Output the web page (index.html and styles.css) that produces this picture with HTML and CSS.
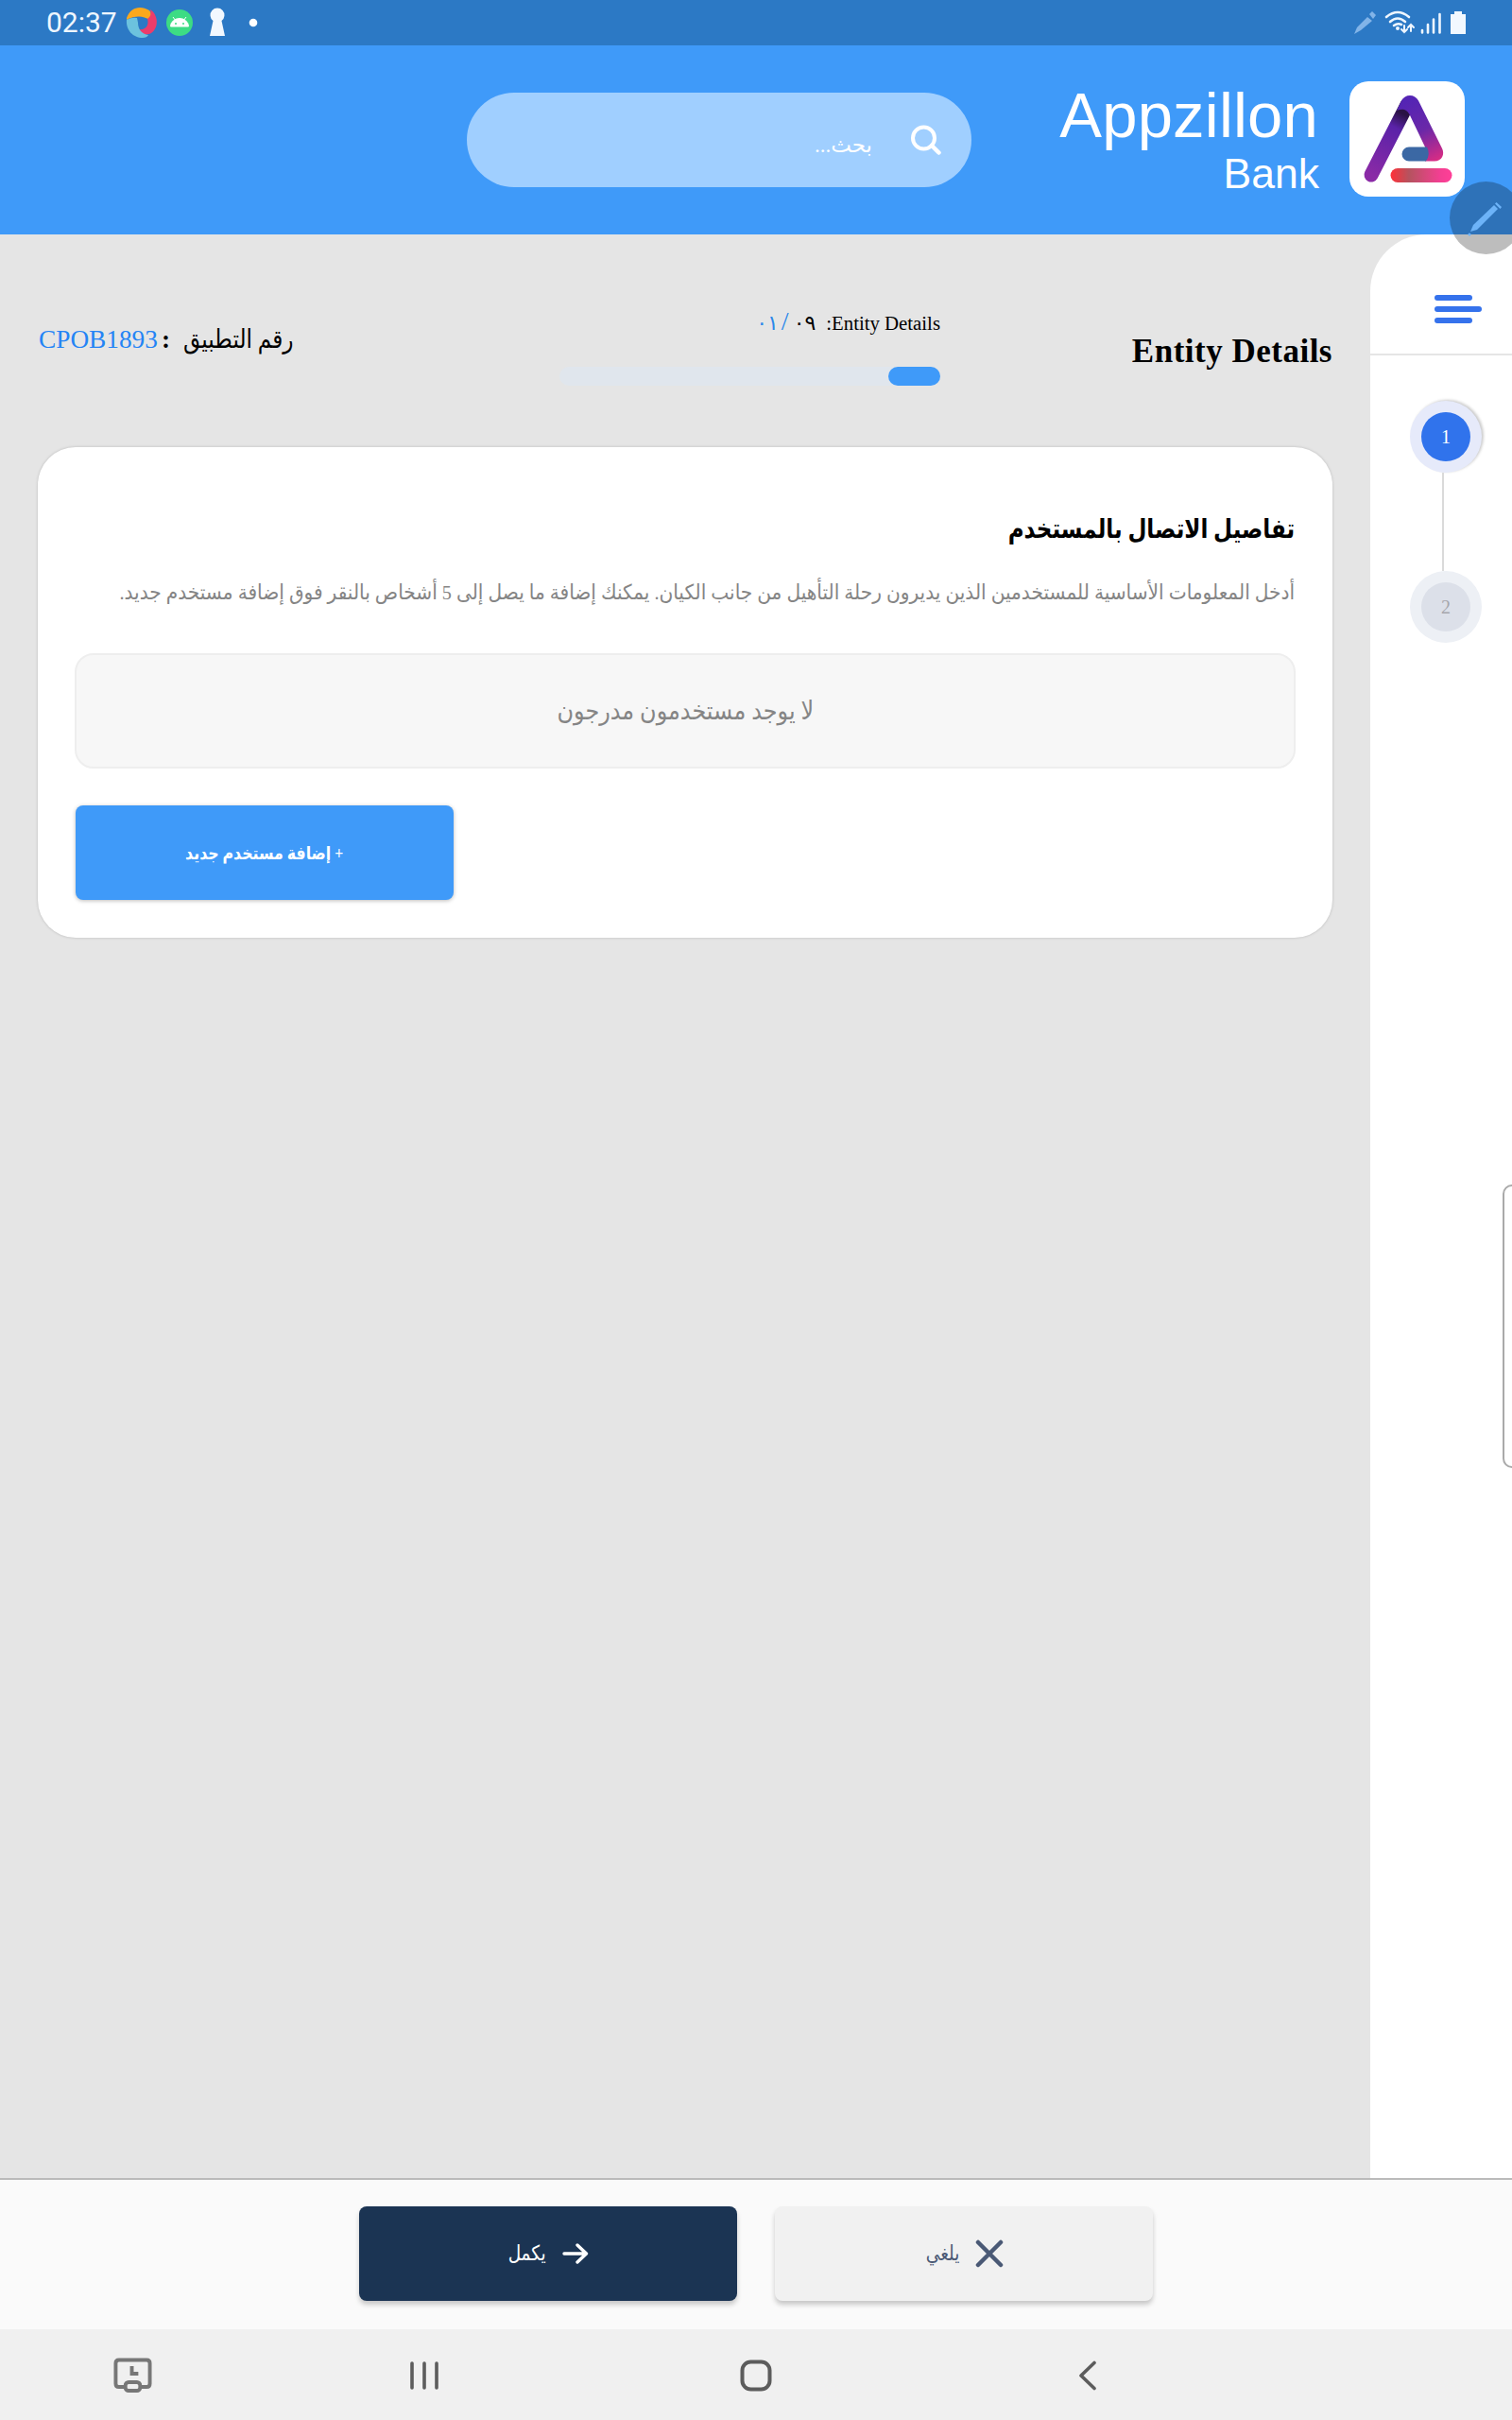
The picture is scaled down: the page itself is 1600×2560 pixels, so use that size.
FILE: index.html
```html
<!DOCTYPE html>
<html lang="ar" dir="rtl">
<head>
<meta charset="utf-8">
<title>Appzillon Bank</title>
<link rel="stylesheet" href="styles.css">
</head>
<body>
<div class="screen">
  <div class="status" dir="ltr">
    <span class="clock">02:37</span>
    <svg class="st-icons" width="150" height="48" viewBox="0 0 150 48">
      <path d="M2 19C6 8 16 5 26 11Q30 15 26 21C20 17 12 16 2 21Z" fill="#fba81c"/>
      <path d="M27 10C36 16 36 30 28 35C22 38 17 36 15 31C22 32 26 27 24 20Q29 17 27 10Z" fill="#ec3d6b"/>
      <path d="M2 21C1 32 9 40 19 40C22 40 24 39 25 37C18 36 14 31 14 24L13 19Q8 18 2 21Z" fill="#6cc2de"/>
      <circle cx="58" cy="24" r="14" fill="#3ddc84"/>
      <path d="M48.500 28a9.500 8.500 0 0 1 19 0ZM51 18l3 4M65 18l-3 4" fill="#fff" stroke="#fff" stroke-width="1"/>
      <circle cx="54" cy="25" r="1" fill="#3ddc84"/><circle cx="62" cy="25" r="1" fill="#3ddc84"/>
      <path d="M93.500 22a7.500 7.500 0 1 1 9 0L106 38H90Z" fill="#f2f8ff"/>
      <circle cx="136" cy="24" r="4.300" fill="#fff"/>
    </svg>
    <svg class="st-right" width="120" height="48" viewBox="0 0 120 48">
      <g fill="#82b4e8"><path d="M3 36L6 29L17 18L22 22L10 32Z"/><path d="M19 15L22 12L26 16L23 20Z"/></g>
      <g fill="none" stroke="#eef6ff" stroke-width="2.600" stroke-linecap="round">
        <path d="M37 18Q49 8 61 18M41 23Q49 16 57 23M45 27Q49 24 53 26"/>
        <path d="M56 27V34M53 31L56 34L59 31M63 33V26M60 29L63 26L66 29" stroke-width="2"/>
        <path d="M75 32V34.500M81 26V34.500M87 20.500V34.500M93.500 15V34.500"/>
      </g>
      <circle cx="49" cy="30" r="2" fill="#eef6ff"/>
      <path d="M105 15H109V12H117V15H121V36H105Z" fill="#f2f8ff"/>
    </svg>
  </div>

  <header class="header">
    <svg class="logo" viewBox="0 0 122 122">
      <defs>
        <linearGradient id="leg" gradientUnits="userSpaceOnUse" x1="60" y1="25" x2="23" y2="99">
          <stop offset="0" stop-color="#2a1244"/><stop offset=".12" stop-color="#2a1244"/><stop offset=".32" stop-color="#5a22a8"/><stop offset="1" stop-color="#8a2aa6"/>
        </linearGradient>
        <linearGradient id="side" gradientUnits="userSpaceOnUse" x1="62" y1="20" x2="92" y2="84">
          <stop offset="0" stop-color="#5424b4"/><stop offset=".5" stop-color="#6a28a8"/><stop offset="1" stop-color="#d82c84"/>
        </linearGradient>
        <linearGradient id="bar"><stop offset="0" stop-color="#ff3038"/><stop offset=".3" stop-color="#b5535f"/><stop offset=".8" stop-color="#f23f92"/><stop offset="1" stop-color="#ff3f98"/></linearGradient>
      </defs>
      <rect width="122" height="122" rx="20" fill="#fff"/>
      <path d="M61 25L23 99" stroke="url(#leg)" stroke-width="15" stroke-linecap="round"/>
      <path d="M64 36L80 69.500V84.500H90C98 84.500 101 77 98 71L73 20.500C69.500 13 58.500 13 55 20.500L50 31C56 28.500 61 29.500 64 36Z" fill="url(#side)"/>
      <path d="M63 69.500H82Q86 77 81 84.500H63A7.500 7.500 0 0 1 63 69.500Z" fill="#3b68a4"/>
      <rect x="43.500" y="92" width="65" height="15" rx="7.500" fill="url(#bar)"/>
    </svg>
    <div class="brand" dir="ltr"><div class="brand-name">Appzillon</div><div class="brand-sub">Bank</div></div>
    <div class="search">
      <svg width="32" height="32" viewBox="0 0 32 32" fill="none" stroke="#fff"><circle cx="13.500" cy="14" r="11.500" stroke-width="4"/><path d="M22 22L29.500 29.500" stroke-width="4.500" stroke-linecap="round"/></svg>
      <span class="search-text">بحث...</span>
    </div>
  </header>

  <div class="body">
    <aside class="side">
      <div class="menu"><svg width="50" height="30" viewBox="0 0 50 30" fill="#3572ec"><rect width="40" height="6" rx="3"/><rect y="12" width="50" height="6" rx="3"/><rect y="24" width="40" height="6" rx="3"/></svg></div>
      <div class="steps">
        <div class="step active"><span>1</span></div>
        <div class="link"></div>
        <div class="step"><span>2</span></div>
      </div>
    </aside>
    <main class="content">
      <div class="top">
        <h1 class="page-title">Entity Details</h1>
        <div class="progress">
          <div class="progress-label" dir="ltr"><span class="cur"><b>٠١</b><i>/</i></span><span class="total">٠٩</span><span>:</span><span>Entity Details</span></div>
          <div class="track"><div class="fill"></div></div>
        </div>
        <div class="app-no" dir="ltr"><span class="code">CPOB1893</span><span class="colon">:</span><span class="app-label">رقم التطبيق</span></div>
      </div>
      <section class="card">
        <h2 class="card-title"><span>تفاصيل الاتصال بالمستخدم</span></h2>
        <p class="desc"><span>أدخل المعلومات الأساسية للمستخدمين الذين يديرون رحلة التأهيل من جانب الكيان. يمكنك إضافة ما يصل إلى 5 أشخاص بالنقر فوق إضافة مستخدم جديد.</span></p>
        <div class="empty"><span>لا يوجد مستخدمون مدرجون</span></div>
        <button class="add"><span>+ إضافة مستخدم جديد</span></button>
      </section>
    </main>
  </div>

  <footer class="actions">
    <button class="btn cancel">
      <svg width="30" height="30" viewBox="0 0 30 30" stroke="#4a5975" stroke-width="4.500" stroke-linecap="round"><path d="M3 3L27 27M27 3L3 27"/></svg>
      <span>يلغي</span>
    </button>
    <button class="btn done">
      <svg width="28" height="22" viewBox="0 0 28 22" fill="none" stroke="#fff" stroke-width="3.400" stroke-linecap="round" stroke-linejoin="round"><path d="M2 11H25M16 2L25.500 11L16 20"/></svg>
      <span>يكمل</span>
    </button>
  </footer>

  <nav class="nav" dir="ltr">
    <svg width="41" height="38" viewBox="0 0 42 38" preserveAspectRatio="none" fill="none" stroke="#777" stroke-width="4"><path d="M13 31H6Q2.500 31 2.500 27.500V6Q2.500 2.500 6 2.500H36Q39.500 2.500 39.500 6V27.500Q39.500 31 36 31H29"/><rect x="13" y="26" width="16" height="9" rx="3.500"/><path d="M20 9V17H27" stroke-width="4"/></svg>
    <svg width="32" height="32" viewBox="0 0 32 32" stroke="#5c5c5c" stroke-width="3.600" stroke-linecap="round"><path d="M3 3V29M16 3V29M29 3V29"/></svg>
    <svg width="34" height="34" viewBox="0 0 34 34" fill="none" stroke="#5c5c5c" stroke-width="4"><rect x="2.500" y="2.500" width="29" height="29" rx="9"/></svg>
    <svg width="20" height="32" viewBox="0 0 20 32" fill="none" stroke="#5c5c5c" stroke-width="3.600" stroke-linecap="round" stroke-linejoin="round"><path d="M17 2.500L3 16L17 29.500"/></svg>
  </nav>

  <div class="pen">
    <svg width="40" height="40" viewBox="0 0 40 40" fill="#6db3f8"><path d="M5 33L8 26L30 5L34 9L12 31Z"/><path d="M31 3.500L32.500 2L38 7L36.500 9Z"/><circle cx="4" cy="36" r="1.500"/></svg>
  </div>
  <div class="edge"></div>
</div>
</body>
</html>
```
FILE: styles.css
```css
* { box-sizing: border-box; }
body { margin: 0; font-family: "Liberation Serif", "DejaVu Sans", serif; color: #000; }
h1, h2, p { margin: 0; }
button { border: 0; padding: 0; font-family: inherit; }
svg { display: block; flex: none; }
.screen { position: relative; width: 1600px; height: 2560px; overflow: hidden; display: flex; flex-direction: column; background: #e5e5e5; }

.status { height: 48px; background: #2c79c5; display: flex; align-items: center; padding: 0 52px 0 49px; }
.clock { font: 30px/50px Roboto, sans-serif; color: #eef6ff; width: 83px; }
.st-right { margin-left: auto; margin-right: -2px; overflow: visible; }

.header { height: 200px; background: #3f9af9; display: flex; padding: 38px 50px 0 0; }
.logo { width: 122px; height: 122px; }
.brand { width: 368px; margin-right: 32px; text-align: right; color: #fff; font-family: "Liberation Sans", sans-serif; }
.brand-name { font-size: 67px; line-height: 72px; letter-spacing: .2px; padding-right: 1px; }
.brand-sub { font-size: 44.500px; line-height: 51px; }
.search { width: 534px; height: 100px; margin-top: 12px; border-radius: 50px; background: #a0cfff; color: #fff; display: flex; align-items: center; padding-right: 32px; gap: 41px; }
.search-text { font-size: 23px; letter-spacing: .3px; margin-top: 11px; }

.body { flex: 1; display: flex; min-height: 0; }
.side { flex: none; width: 150px; background: #fff; border-top-left-radius: 60px; }
.menu { height: 128px; padding: 64px 32px 0 0; border-bottom: 2px solid #e5e5e5; }
.steps { display: flex; flex-direction: column; align-items: center; padding-top: 48px; margin-right: -5px; }
.menu, .steps { width: 150px; }
.step { width: 76px; height: 76px; border-radius: 50%; background: #edf0f5; display: flex; align-items: center; justify-content: center; }
.step span { width: 52px; height: 52px; border-radius: 50%; background: #dce0e9; color: #a6a6ac; font-size: 20px; line-height: 53px; text-align: center; }
.step.active { background: #e6eafa; box-shadow: 2px -1px 3px #ccc; }
.step.active span { background: #3073ec; color: #fff; }
.link { width: 2px; height: 104px; background: #dadada; margin-right: 6px; }
.link { margin-right: 0; margin-left: 6px; transform: translateX(-6px); }

.content { flex: 1; min-width: 0; padding: 0 40px; }
.top { height: 225px; display: grid; grid-template-columns: 415px 403px 1fr; }
.page-title { font-size: 35px; letter-spacing: .5px; line-height: 40px; padding-top: 104px; white-space: nowrap; }
.progress { padding-top: 81px; }
.progress-label { display: flex; justify-content: flex-end; font-size: 20.800px; line-height: 26px; }
.progress-label b, .progress-label i { font-weight: 400; font-style: normal; }
.cur { color: #2b88ea; }
.cur b { font-size: 22px; letter-spacing: 1px; margin-right: 3px; }
.cur i { font-size: 28px; line-height: 20px; }
.total { font-size: 22px; letter-spacing: 1.500px; margin: 0 11px 0 5px; }
.track { height: 20px; margin-top: 33px; border-radius: 10px; background: #e0e6ed; }
.fill { width: 55px; height: 20px; border-radius: 10px; background: #3f9af9; }
.app-no { padding: 93px 0 0 1px; font-size: 27.300px; line-height: 36px; display: flex; }
.code { color: #2484f5; }
.colon { margin: 0 14px 0 4px; font-weight: 700; }
.app-label { transform: scaleX(.85); transform-origin: left; }

.card { height: 519px; border-radius: 40px; background: #fff; box-shadow: 0 0 3px #b8b8b8; padding: 64px 40px 0; display: flex; flex-direction: column; }
.card span, .app-label, .btn span { display: inline-block; white-space: nowrap; }
.card-title { font-size: 28px; line-height: 46px; }
.card-title span { transform: scaleX(.822); transform-origin: right; }
.desc { color: #858585; font-size: 22px; line-height: 40px; margin-top: 24px; }
.desc span { transform: scaleX(.915); transform-origin: right; }
.empty { width: 1292px; height: 122px; margin: 44px -1px 0; border: 2px solid #eeeeee; border-radius: 20px; background: #f7f7f7; color: #858585; font-size: 27px; display: flex; align-items: center; justify-content: center; }
.empty span { transform: scaleX(.886); }
.add { width: 400px; height: 100px; margin-top: 39px; align-self: flex-end; border-radius: 8px; background: #3f9af9; color: #fff; font-size: 19px; font-weight: 700; box-shadow: 0 1px 4px #bbb; }
.add span { transform: scaleX(.83); }

.actions { height: 160px; background: #fafafa; border-top: 2px solid #bbb; display: flex; justify-content: center; gap: 40px; padding-top: 28px; }
.btn { width: 400px; height: 100px; border-radius: 8px; display: flex; align-items: center; justify-content: center; gap: 17px; font-size: 22px; box-shadow: 0 4px 5px #c8c8c8; }
.btn span { transform: scaleX(.84); transform-origin: right; margin-left: -8px; }
.cancel { background: #f1f1f1; color: #4a5975; padding-left: 3px; }
.done { background: #1b3453; color: #fff; padding-left: 1px; }

.nav { height: 96px; background: #f0f0f0; display: flex; align-items: center; padding: 1px 0 0 120px; }
.nav svg:nth-child(2) { margin-left: 272px; }
.nav svg:nth-child(3) { margin-left: 318px; }
.nav svg:nth-child(4) { margin-left: 324px; }

.pen { position: absolute; left: 1534px; top: 192px; width: 77px; height: 77px; border-radius: 50%; background: rgba(0,0,0,.26); padding: 20px 0 0 17px; display: flex; direction: ltr; }
.edge { position: absolute; left: 1590px; top: 1253px; width: 20px; height: 300px; border: 2px solid #aaa; border-radius: 10px; background: #fff; }
```
